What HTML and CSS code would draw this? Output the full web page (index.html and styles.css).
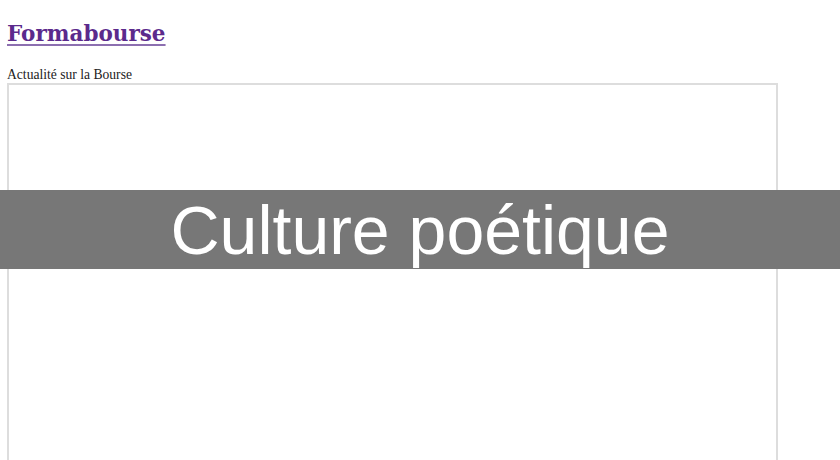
FILE: index.html
```html
<!DOCTYPE html>
<html lang="fr">
<head>
<meta charset="utf-8">
<title>Formabourse</title>
<link rel="stylesheet" href="styles.css">
</head>
<body>
<div class="page">
  <a class="site-title" href="#">Formabourse</a>
  <p class="tagline">Actualité sur la Bourse</p>
  <div class="frame"></div>
</div>
<div class="banner">Culture poétique</div>
</body>
</html>
```
FILE: styles.css
```css
html, body {
  margin: 0;
  padding: 0;
  background: #fff;
  overflow: hidden;
}
body {
  width: 840px;
  height: 460px;
  position: relative;
  font-family: "Liberation Serif", "DejaVu Serif", serif;
}
.page {
  padding: 18px 0 0 7px;
  display: flex;
  flex-direction: column;
  align-items: flex-start;
}
.site-title {
  font-family: "DejaVu Serif", "Liberation Serif", serif;
  font-weight: bold;
  font-size: 21.5px;
  line-height: 32px;
  color: #5b2a8c;
  text-decoration: underline;
  text-decoration-color: #8c6fb0;
  text-underline-offset: 3px;
}
.tagline {
  margin: 18px 0 0 0;
  font-size: 13.6px;
  line-height: 14px;
  color: #222;
}
.frame {
  margin-top: 1px;
  width: 767px;
  height: 375px;
  border: 2px solid #ddd;
  border-bottom: none;
}
.banner {
  position: absolute;
  left: 0;
  top: 190px;
  width: 840px;
  height: 79px;
  background: #777;
  color: #fff;
  font-family: "Liberation Sans", Arial, sans-serif;
  font-size: 68px;
  line-height: 80px;
  text-align: center;
}
```
